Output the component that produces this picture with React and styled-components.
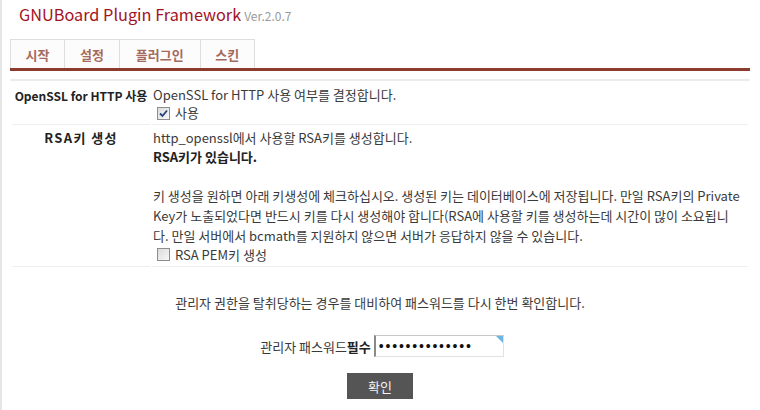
import React from "react";
import styled, { createGlobalStyle } from "styled-components";

const GlobalStyle = createGlobalStyle`
body {
  margin: 0;
  background: #fff;
  font-family: "Noto Sans CJK KR", "Liberation Sans", sans-serif;
  font-size: 13px;
  color: #3a3a3a;
}
`;

const Page = styled.div`
min-height: 410px;
box-sizing: border-box;
border-left: 2px solid #e6e6e6;
padding: 0 10px 0 8px;
`;

const Header = styled.div`
height: 39px;
padding: 2px 0 0 9px;
box-sizing: border-box;
display: flex;
align-items: baseline;
gap: 3px;
`;

const Title = styled.h1`
margin: 0;
font-size: 16.3px;
font-weight: normal;
color: #a3131f;
`;

const Version = styled.span`
font-size: 12px;
color: #9a9a9a;
`;

const Tabs = styled.div`
display: flex;
border-bottom: 3px solid #8e3b2f;
`;

const Tab = styled.div`
height: 29px;
box-sizing: border-box;
padding: 0 ${(p) => p.$pad}px;
border: 1px solid #dedede;
border-left-width: ${(p) => (p.$first ? 1 : 0)}px;
border-bottom: 0;
background: #fcfcfc;
display: flex;
align-items: center;
font-weight: bold;
font-size: 13px;
color: #a56a5e;
`;

const FormTable = styled.table`
width: 100%;
table-layout: fixed;
margin-top: 8px;
border-top: 2px solid #ececec;
border-collapse: separate;
border-spacing: 2px 0;
`;

const Label = styled.th`
width: 138px;
padding: ${(p) => p.$top}px 0 0;
vertical-align: top;
text-align: center;
white-space: nowrap;
font-weight: bold;
font-size: ${(p) => p.$size}px;
letter-spacing: ${(p) => p.$ls || 0}px;
line-height: 19px;
color: #222;
border-bottom: 1px solid #eee;
`;

const Cell = styled.td`
padding: ${(p) => p.$top}px 0 2px 1px;
vertical-align: top;
line-height: 19.6px;
border-bottom: 1px solid #eee;
`;

const Line = styled.div`
font-weight: ${(p) => (p.$bold ? "bold" : "normal")};
color: ${(p) => (p.$bold ? "#222" : "inherit")};
`;

const Gap = styled.div`
height: 19.6px;
`;

const CheckRow = styled.label`
display: flex;
align-items: center;
gap: 5px;
height: ${(p) => p.$h}px;
padding-left: 4px;
`;

const CheckBox = styled.span`
width: 11px;
height: 11px;
border: 1px solid #8d8d8d;
background: linear-gradient(135deg, #dcdcdc, #f7f7f7);
display: flex;
align-items: center;
justify-content: center;
`;

const Confirm = styled.div`
display: flex;
flex-direction: column;
align-items: center;
padding-top: 26px;
`;

const Notice = styled.p`
margin: 0;
line-height: 20px;
`;

const PassRow = styled.div`
display: flex;
align-items: center;
gap: 3px;
margin-top: 22px;
margin-left: 4px;
`;

const Strong = styled.b`
font-weight: bold;
color: #222;
`;

const InputWrap = styled.div`
position: relative;
&::after {
  content: "";
  position: absolute;
  top: 1px;
  right: 1px;
  border-top: 7px solid #6ab4e6;
  border-left: 7px solid transparent;
}
`;

const PassInput = styled.input`
display: block;
width: 130px;
height: 22px;
box-sizing: border-box;
border: 1px solid #e2e2e2;
border-left: 2px solid #8a8a8a;
border-top-color: #c8c8c8;
padding: 0 3px;
font-family: "Liberation Sans", sans-serif;
font-size: 14px;
letter-spacing: 1.8px;
color: #111;
outline: none;
`;

const Button = styled.button`
margin-top: 16px;
width: 66px;
height: 26px;
border: 0;
background: #555;
color: #f4f4f4;
font-family: "Noto Sans CJK KR", sans-serif;
font-size: 13px;
`;

function Check({ checked }) {
  return (
    <CheckBox>
      {checked && (
        <svg width="9" height="9" viewBox="0 0 9 9">
          <path d="M1 4.5 L3.5 7 L8 1.5" fill="none" stroke="#24407e" strokeWidth="1.8" />
        </svg>
      )}
    </CheckBox>
  );
}

export default function App() {
  return (
    <Page>
      <GlobalStyle />
      <Header>
        <Title>GNUBoard Plugin Framework</Title>
        <Version>Ver.2.0.7</Version>
      </Header>
      <Tabs>
        <Tab $first $pad={14.5}>시작</Tab>
        <Tab $pad={15}>설정</Tab>
        <Tab $pad={16}>플러그인</Tab>
        <Tab $pad={14.5}>스킨</Tab>
      </Tabs>
      <FormTable>
        <tbody>
          <tr>
            <Label $top={5} $size={12}>OpenSSL for HTTP 사용</Label>
            <Cell $top={4}>
              <Line>OpenSSL for HTTP 사용 여부를 결정합니다.</Line>
              <CheckRow $h={17}>
                <Check checked />
                사용
              </CheckRow>
            </Cell>
          </tr>
          <tr>
            <Label $top={3} $size={13} $ls={1.4}>RSA키 생성</Label>
            <Cell $top={3}>
              <Line>http_openssl에서 사용할 RSA키를 생성합니다.</Line>
              <Line $bold>RSA키가 있습니다.</Line>
              <Gap />
              <Line>
                키 생성을 원하면 아래 키생성에 체크하십시오. 생성된 키는 데이터베이스에 저장됩니다. 만일 RSA키의 Private
                <br />
                Key가 노출되었다면 반드시 키를 다시 생성해야 합니다(RSA에 사용할 키를 생성하는데 시간이 많이 소요됩니
                <br />
                다. 만일 서버에서 bcmath를 지원하지 않으면 서버가 응답하지 않을 수 있습니다.
              </Line>
              <CheckRow $h={19}>
                <Check />
                RSA PEM키 생성
              </CheckRow>
            </Cell>
          </tr>
        </tbody>
      </FormTable>
      <Confirm>
        <Notice>관리자 권한을 탈취당하는 경우를 대비하여 패스워드를 다시 한번 확인합니다.</Notice>
        <PassRow>
          <span>
            관리자 패스워드<Strong>필수</Strong>
          </span>
          <InputWrap>
            <PassInput type="password" defaultValue="gnuboard123456" />
          </InputWrap>
        </PassRow>
        <Button>확인</Button>
      </Confirm>
    </Page>
  );
}
